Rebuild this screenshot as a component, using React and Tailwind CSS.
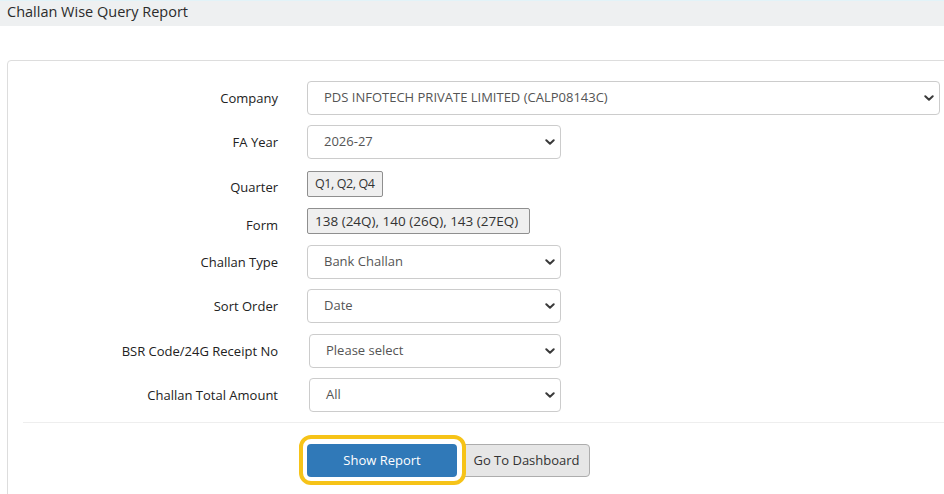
import React from 'react';

function Chevron() {
  return (
    <svg className="pointer-events-none absolute right-[5px] top-1/2 -translate-y-1/2" width="10" height="6" viewBox="0 0 10 6">
      <path d="M1.3 1.2 L5 4.7 L8.7 1.2" fill="none" stroke="#3a3a3a" strokeWidth="2" strokeLinecap="round" strokeLinejoin="round" />
    </svg>
  );
}

function Select({ value, className }) {
  return (
    <div className={`relative h-[34px] rounded-[4px] border border-[#cccccc] bg-white ${className}`}>
      <div className="flex h-full items-center pl-[16px] text-[13px] text-[#555]">{value}</div>
      <Chevron />
    </div>
  );
}

function Row({ label, mt, children }) {
  return (
    <div className={`flex items-start ${mt}`}>
      <div className="w-[270px] shrink-0 pt-[7px] text-right text-[13px] leading-5 text-[#222]">{label}</div>
      <div className="ml-[29px] flex-1">{children}</div>
    </div>
  );
}

function Static({ value, className }) {
  return (
    <div className={`inline-block whitespace-nowrap rounded-[2px] border border-[#8f8f8f] bg-[#efefef] py-[2px] leading-5 text-[#333] ${className}`}>
      {value}
    </div>
  );
}

export default function App() {
  return (
    <div className="h-[494px] w-[944px] overflow-hidden bg-white" style={{ fontFamily: '"Open Sans", "Noto Sans", sans-serif' }}>
      <div className="h-[26px] border-t border-[#e2f3f8] bg-[#eef0f1] pl-[7px] text-[14.5px] leading-[22px] text-[#2b2b2b]">
        Challan Wise Query Report
      </div>

      <div className="ml-[7px] mr-[-20px] mt-[34px] h-[460px] rounded-tl-[4px] border border-[#dddddd]">
        <Row label="Company" mt="mt-[20px]">
          <Select value="PDS INFOTECH PRIVATE LIMITED (CALP08143C)" className="w-[633px]" />
        </Row>
        <Row label="FA Year" mt="mt-[10px]">
          <Select value="2026-27" className="w-[254px]" />
        </Row>
        <Row label="Quarter" mt="mt-[11px]">
          <Static value="Q1, Q2, Q4" className="px-[7px] text-[12.5px] tracking-[-0.4px]" />
        </Row>
        <Row label="Form" mt="mt-[11px]">
          <Static value="138 (24Q), 140 (26Q), 143 (27EQ)" className="w-[223px] px-[7px] text-[13.5px]" />
        </Row>
        <Row label="Challan Type" mt="mt-[10px]">
          <Select value="Bank Challan" className="w-[254px]" />
        </Row>
        <Row label="Sort Order" mt="mt-[10px]">
          <Select value="Date" className="w-[254px]" />
        </Row>
        <Row label="BSR Code/24G Receipt No" mt="mt-[11px]">
          <Select value="Please select" className="ml-[2px] w-[252px]" />
        </Row>
        <Row label="Challan Total Amount" mt="mt-[10px]">
          <Select value="All" className="ml-[2px] w-[252px]" />
        </Row>

        <div className="ml-[15px] mt-[10px] border-t border-[#eeeeee]" />

        <div className="ml-[299px] mt-[21px] flex items-center">
          <div className="relative">
            <button className="h-[33px] w-[150px] rounded-[4px] bg-[#3079b8] text-[13px] text-white">Show Report</button>
            <div className="pointer-events-none absolute -left-[8px] -top-[9px] h-[50px] w-[167px] rounded-[12px] border-[4px] border-[#f6c318]" />
          </div>
          <button className="ml-[6px] h-[33px] w-[127px] rounded-r-[4px] border border-[#adadad] bg-[#e6e6e6] text-[13px] text-[#333]">
            Go To Dashboard
          </button>
        </div>
      </div>
    </div>
  );
}
